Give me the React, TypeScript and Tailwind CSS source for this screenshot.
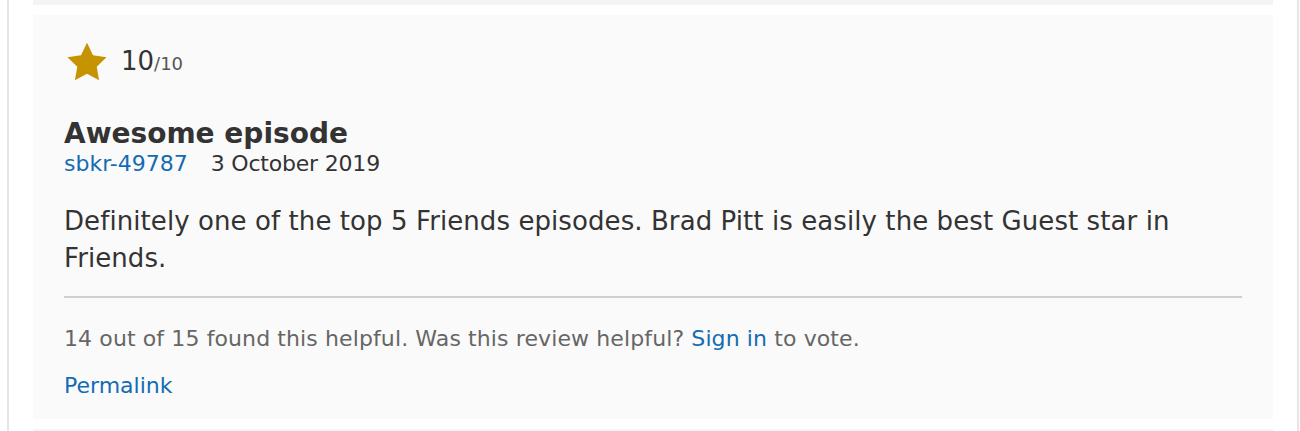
const font = { fontFamily: '"DejaVu Sans", Verdana, sans-serif' };

function Star() {
  return (
    <svg width="42" height="40" viewBox="0 0 24 23" aria-hidden>
      <path
        d="M12 0.5l3.45 7.1 7.8 1.1-5.65 5.5 1.35 7.75L12 18.2l-6.95 3.75 1.35-7.75L0.75 8.7l7.8-1.1z"
        fill="#c69400"
      />
    </svg>
  );
}

function Review() {
  return (
    <article className="bg-[#fafafa] pl-[31px] pr-[31px] pt-[27px] pb-[20px] text-[#333]">
      <div className="flex items-center gap-[13px] pl-[2px]">
        <Star />
        <span className="text-[26px] leading-[28px]">
          10<span className="text-[18px] text-[#555]">/10</span>
        </span>
      </div>
      <h2 className="mt-[36px] text-[28px] font-bold leading-[31px]">Awesome episode</h2>
      <div className="mt-[2px] text-[22px] leading-[26px]">
        <a className="text-[#136cb2]">sbkr-49787</a>
        <span className="ml-[23px] tracking-[-0.2px]">3 October 2019</span>
      </div>
      <p className="mt-[26px] text-[26px] leading-[37px] tracking-[0.08px]">
        Definitely one of the top 5 Friends episodes. Brad Pitt is easily the best Guest star in
        Friends.
      </p>
      <div className="mt-[19px] h-[2px] bg-[#cfcfcf]" />
      <p className="mt-[28px] text-[22px] leading-[26px] tracking-[0.11px] text-[#666]">
        14 out of 15 found this helpful. Was this review helpful?{" "}
        <a className="text-[#136cb2]">Sign in</a> to vote.
      </p>
      <a className="mt-[21px] block text-[22px] leading-[26px] text-[#136cb2]">Permalink</a>
    </article>
  );
}

export default function App() {
  return (
    <div className="h-[431px] overflow-hidden bg-white pl-[7px]" style={font}>
      <div className="mr-[1px] flex flex-col gap-[10px] border-x-2 border-[#e6e6e6] px-[24px]">
        <div className="mt-[-40px] h-[45px] bg-[#f4f4f4]" />
        <Review />
        <div className="h-[60px] bg-[#f4f4f4]" />
      </div>
    </div>
  );
}
